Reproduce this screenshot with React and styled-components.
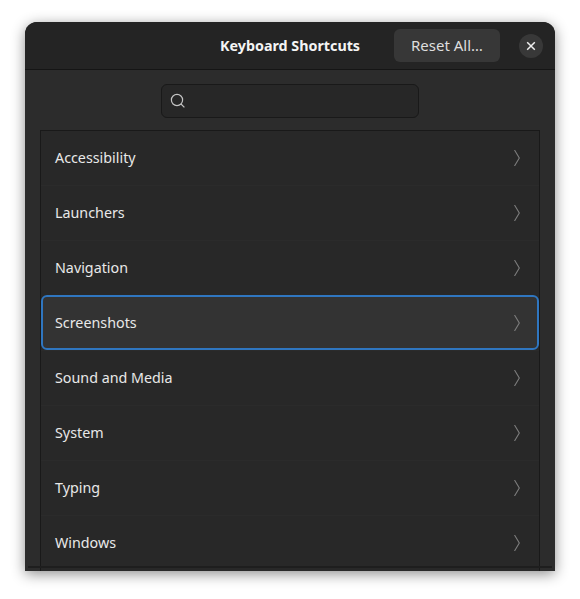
import React from 'react';
import styled, { createGlobalStyle } from 'styled-components';

const GlobalStyle = createGlobalStyle`
  html, body {
    margin: 0;
    height: 100%;
    background: #ffffff;
    overflow: hidden;
  }
`

const Page = styled.div`
  box-sizing: border-box;
  width: 580px;
  height: 599px;
  padding: 22px 25px 28px;
  font-family: "Noto Sans", "Open Sans", sans-serif;
`

const Dialog = styled.div`
  height: 549px;
  display: flex;
  flex-direction: column;
  background: #2c2c2c;
  border-radius: 12px 12px 0 0;
  overflow: hidden;
  box-shadow: 0 3px 14px rgba(0, 0, 0, 0.45);
`

const Header = styled.header`
  flex: none;
  box-sizing: border-box;
  height: 48px;
  display: flex;
  align-items: center;
  background: #242424;
  border-bottom: 1px solid #151515;
  padding: 0 12px 0 195px;
`

const Title = styled.h1`
  width: 140px;
  margin: 0;
  font-size: 14.3px;
  font-weight: 700;
  color: #f4f4f4;
  white-space: nowrap;
`

const ResetButton = styled.button`
  width: 106px;
  height: 33px;
  margin-left: 34px;
  padding: 0 0 2px;
  border: 0;
  border-radius: 6px;
  background: #373737;
  color: #dedede;
  font: inherit;
  font-size: 15px;
`

const CloseButton = styled.button`
  width: 24px;
  height: 24px;
  margin-left: 19px;
  padding: 0;
  border: 0;
  border-radius: 50%;
  background: #383838;
  color: #efefef;
  display: flex;
  align-items: center;
  justify-content: center;
`

const Body = styled.main`
  flex: 1;
  min-height: 0;
  display: flex;
  flex-direction: column;
  padding: 14px 15px 0;
`

const SearchBox = styled.div`
  flex: none;
  box-sizing: border-box;
  align-self: center;
  width: 258px;
  height: 34px;
  display: flex;
  align-items: center;
  padding-left: 8px;
  background: #272727;
  border: 1px solid #191919;
  border-radius: 6px;
  color: #c4c4c4;
`

const List = styled.ul`
  flex: none;
  box-sizing: border-box;
  height: 441px;
  margin: 12px 0 0;
  padding: 0;
  list-style: none;
  overflow: hidden;
  background: #282828;
  border: 1px solid #191919;
  border-bottom: 0;
`

const RowLabel = styled.span`
  margin-top: -2px;
`

const Row = styled.li`
  box-sizing: border-box;
  height: 55px;
  display: flex;
  align-items: center;
  justify-content: space-between;
  padding: 0 19px 0 14px;
  font-size: 14.3px;
  color: #e8e8e8;
  border-top: 1px solid #2b2b2b;

  &:first-child {
    border-top: 0;
    height: 54px;
  }
`

const FocusedRow = styled(Row)`
  background: #333333;
  border: 2px solid #2f76c0;
  border-radius: 6px;
  padding: 0 17px 0 12px;

  ${RowLabel} {
    margin-top: 0;
  }
`

const Footer = styled.div`
  flex: none;
  height: 3px;
  margin: -5px -12px 0;
  border-top: 2px solid #1e1e1e;
`

const Chevron = () => (
  <svg width="6" height="16" viewBox="0 0 6 16" fill="none" stroke="#7d7d7d" strokeWidth="1.1">
    <path d="M.5 0 5.3 8 .5 16" />
  </svg>
)

const categories = ['Accessibility', 'Launchers', 'Navigation', 'Screenshots', 'Sound and Media', 'System', 'Typing', 'Windows']

const App = () => {
  return <Page>
      <GlobalStyle />
      <Dialog>
          <Header>
              <Title>Keyboard Shortcuts</Title>
              <ResetButton>Reset All…</ResetButton>
              <CloseButton aria-label="Close">
                  <svg width="10" height="10" viewBox="0 0 10 10" stroke="currentColor" strokeWidth="1.5">
                      <path d="M1.2 1.2 8.8 8.8M8.8 1.2 1.2 8.8" />
                  </svg>
              </CloseButton>
          </Header>
          <Body>
              <SearchBox>
                  <svg width="16" height="16" viewBox="0 0 16 16" fill="none" stroke="currentColor" strokeWidth="1.2">
                      <circle cx="7" cy="7" r="5.6" />
                      <path d="M11 11 14.4 14.4" />
                  </svg>
              </SearchBox>
              <List>
                  {categories.map((name) => {
                      const Item = name === 'Screenshots' ? FocusedRow : Row
                      return <Item key={name}><RowLabel>{name}</RowLabel><Chevron /></Item>
                  })}
              </List>
              <Footer />
          </Body>
      </Dialog>
  </Page>;
};

export default App;
